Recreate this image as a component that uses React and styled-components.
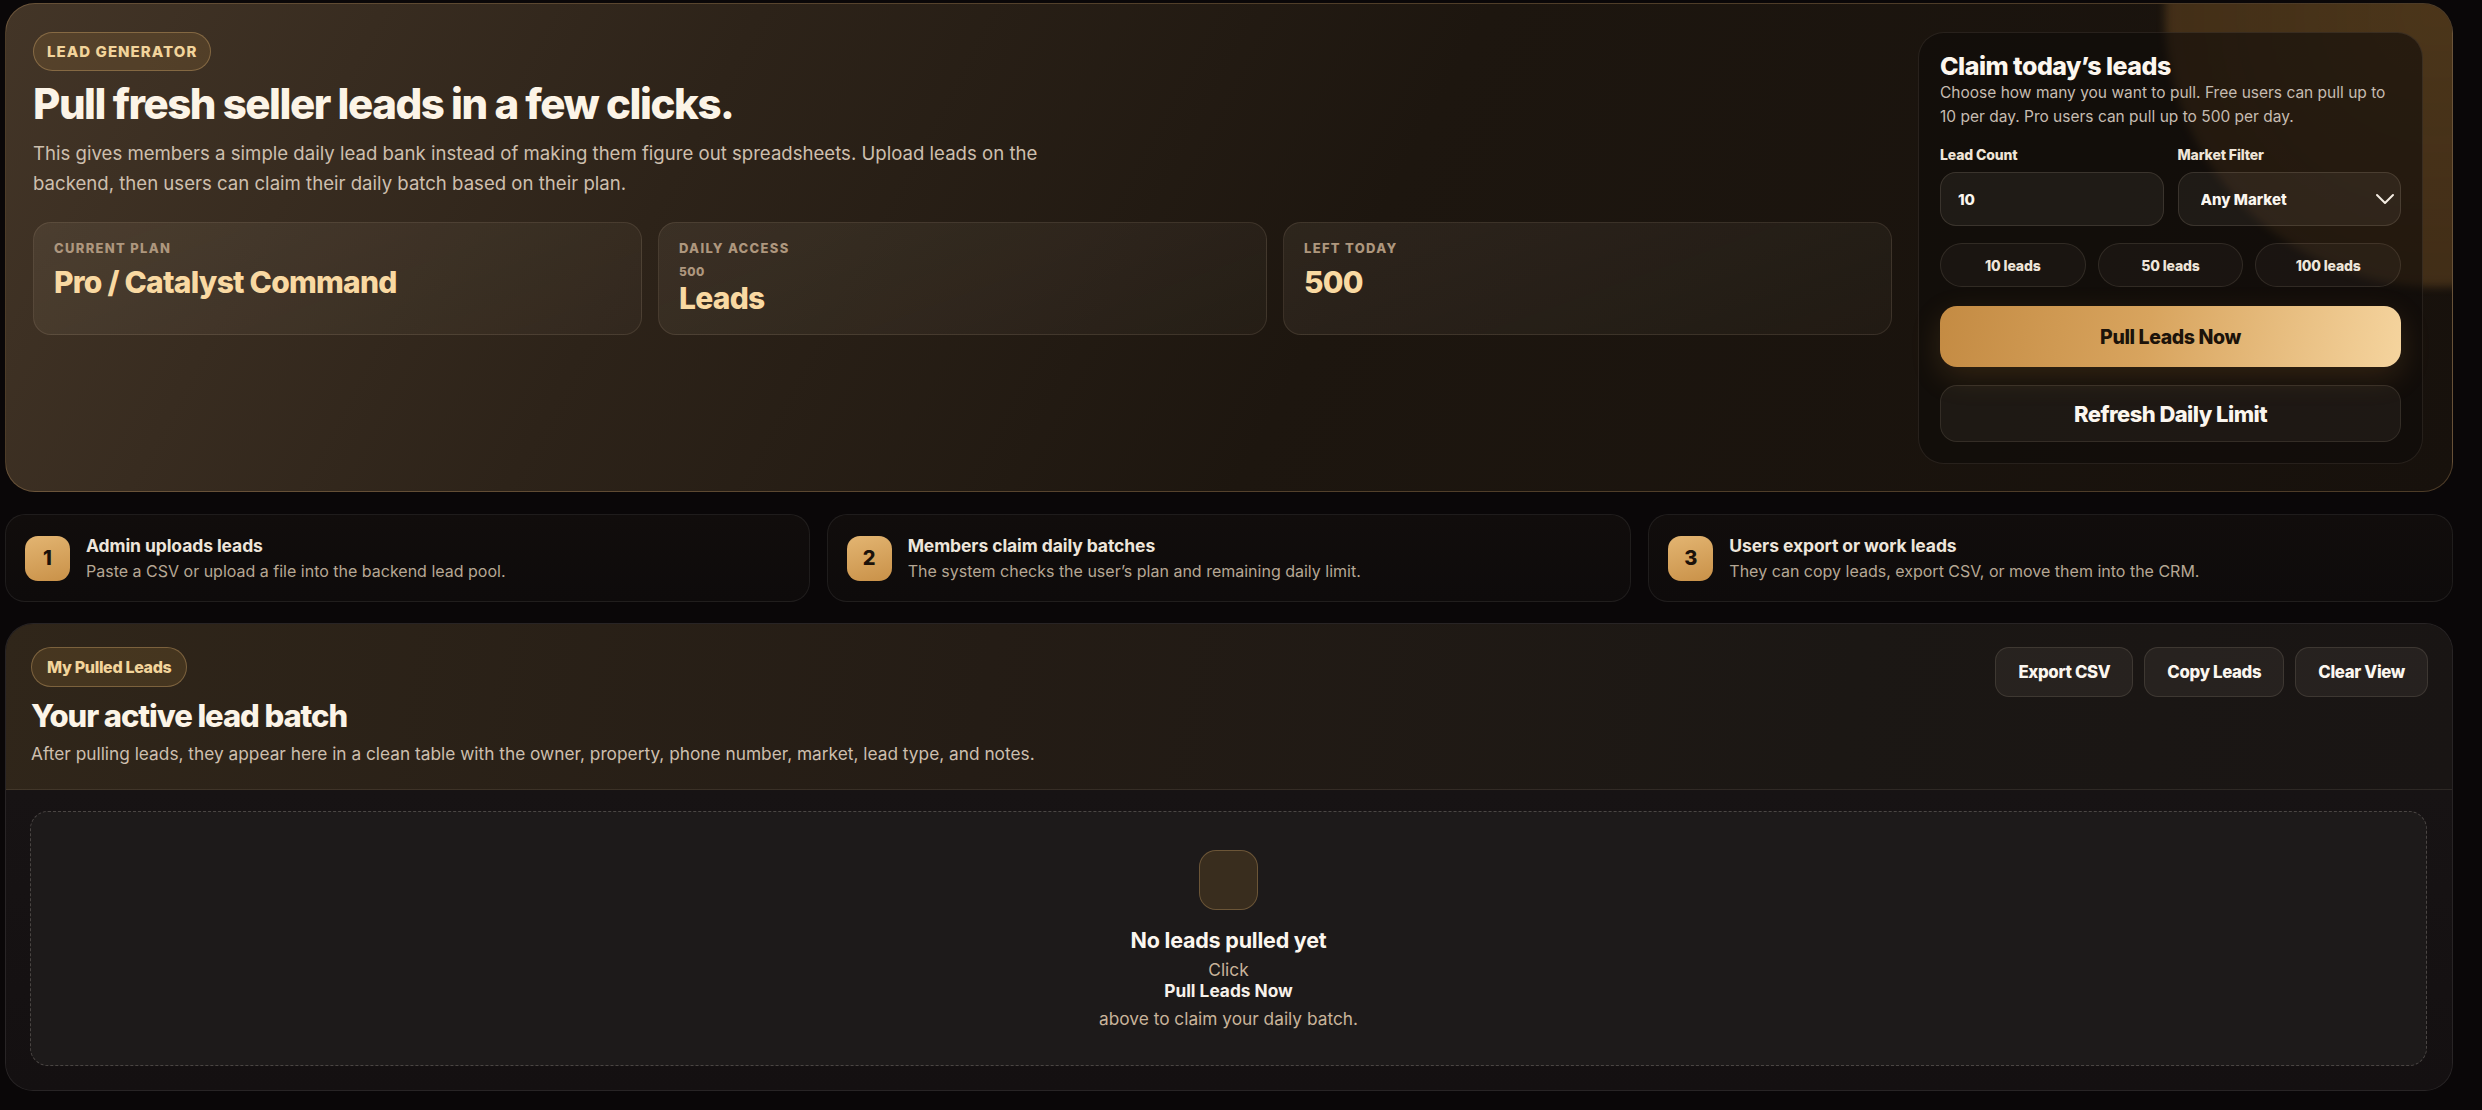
import React from "react";
import styled, { createGlobalStyle } from "styled-components";
import { ChevronDown } from "lucide-react";

const GlobalStyle = createGlobalStyle`
  * { box-sizing: border-box; }
  html, body { margin: 0; padding: 0; background: #0a0708; }
  body {
    font-family: Inter, "Noto Sans", "Liberation Sans", sans-serif;
    color: #f5eee4;
    -webkit-font-smoothing: antialiased;
  }
`;

const Page = styled.div`
  display: flex;
  flex-direction: column;
  gap: 21px;
  padding: 3px 29px 19px 5px;
  height: 100vh;
  background: #0a0708;
`;

/* ---------- hero ---------- */

const Hero = styled.section`
  position: relative;
  flex: none;
  overflow: hidden;
  display: grid;
  grid-template-columns: 1fr 505px;
  gap: 26px;
  padding: 28px 29px 27px 27px;
  border-radius: 30px;
  border: 1px solid rgba(214, 170, 110, 0.28);
  background: linear-gradient(118deg, #433527 0%, #2d2319 28%, #1d160f 55%, #17110c 100%);
`;

const Glow = styled.div`
  position: absolute;
  top: -262px;
  right: -258px;
  width: 545px;
  height: 545px;
  border-radius: 50%;
  background: radial-gradient(circle, rgba(215, 150, 65, 0.27) 0%, rgba(205, 140, 60, 0.23) 70%, rgba(205, 140, 60, 0.2) 100%);
  filter: blur(4px);
  pointer-events: none;
`;

const HeroMain = styled.div`
  position: relative;
  display: flex;
  flex-direction: column;
  align-items: flex-start;
  min-width: 0;
`;

const Pill = styled.span`
  display: inline-flex;
  align-items: center;
  height: ${(p) => p.$h || 39}px;
  padding: 0 ${(p) => p.$px || 13}px;
  border-radius: 999px;
  border: 1px solid rgba(214, 170, 110, 0.38);
  background: rgba(190, 140, 70, 0.16);
  color: #f2d49b;
  font-size: ${(p) => p.$fs || 14}px;
  font-weight: 800;
  letter-spacing: ${(p) => p.$ls || "0.06em"};
  text-transform: ${(p) => (p.$upper ? "uppercase" : "none")};
  white-space: nowrap;
`;

const HeroTitle = styled.h1`
  margin: 10px 0 0;
  font-size: 42px;
  line-height: 1.1;
  font-weight: 800;
  letter-spacing: -0.035em;
  color: #fcf4e7;
`;

const HeroText = styled.p`
  margin: 11px 0 0;
  max-width: 1060px;
  font-size: 18.6px;
  line-height: 30px;
  color: #cdbfae;
`;

const StatGrid = styled.div`
  align-self: stretch;
  display: grid;
  grid-template-columns: repeat(3, 1fr);
  gap: 16px;
  margin-top: 24px;
`;

const StatCard = styled.div`
  display: flex;
  flex-direction: column;
  padding: 18px 20px 18px;
  border-radius: 18px;
  border: 1px solid rgba(255, 230, 200, 0.1);
  background: linear-gradient(160deg, rgba(255, 235, 205, 0.07), rgba(255, 235, 205, 0.03));
`;

const StatLabel = styled.div`
  font-size: 13px;
  line-height: 15.6px;
  font-weight: 800;
  letter-spacing: 0.1em;
  text-transform: uppercase;
  color: #ae977e;
`;

const StatSub = styled.div`
  margin-top: 8px;
  font-size: 12px;
  line-height: 14.4px;
  font-weight: 800;
  letter-spacing: 0.04em;
  color: #ae977e;
`;

const StatValue = styled.div`
  margin-top: ${(p) => (p.$tight ? 2 : 8)}px;
  font-size: 30px;
  line-height: 34.5px;
  font-weight: 800;
  letter-spacing: -0.025em;
  color: #f9d9a2;
`;

/* ---------- claim panel ---------- */

const ClaimPanel = styled.div`
  position: relative;
  display: flex;
  flex-direction: column;
  padding: 18px 21px 21px;
  border-radius: 26px;
  border: 1px solid rgba(255, 235, 210, 0.09);
  background: rgba(14, 10, 8, 0.58);
`;

const ClaimTitle = styled.h2`
  margin: 0;
  font-size: 25px;
  line-height: 30px;
  font-weight: 800;
  letter-spacing: -0.02em;
  color: #fcf6ee;
`;

const ClaimText = styled.p`
  margin: 0;
  font-size: 15.5px;
  line-height: 24px;
  color: #c6bcb1;
`;

const FieldRow = styled.div`
  display: grid;
  grid-template-columns: 1fr 1fr;
  gap: 14px;
  margin-top: 17px;
`;

const Field = styled.label`
  display: flex;
  flex-direction: column;
  gap: 9px;
`;

const FieldLabel = styled.span`
  font-size: 14px;
  line-height: 17px;
  font-weight: 800;
  letter-spacing: -0.01em;
  color: #efe5d8;
`;

const fieldBox = `
  width: 100%;
  height: 54px;
  border-radius: 16px;
  border: 1px solid rgba(255, 235, 210, 0.12);
  background: rgba(255, 240, 220, 0.06);
  color: #fbf6ef;
  font-family: Inter, "Noto Sans", "Liberation Sans", sans-serif;
  font-size: 15px;
  font-weight: 800;
  outline: none;
`;

const TextInput = styled.input`
  ${fieldBox}
  padding: 0 17px;
`;

const SelectWrap = styled.div`
  position: relative;
  color: #f4ece2;
  svg {
    position: absolute;
    right: 0;
    top: 50%;
    transform: translateY(-50%);
    pointer-events: none;
  }
`;

const Select = styled.select`
  ${fieldBox}
  appearance: none;
  padding: 0 40px 0 22px;
`;

const QuickRow = styled.div`
  display: grid;
  grid-template-columns: repeat(3, 1fr);
  gap: 12px;
  margin-top: 17px;
`;

const QuickButton = styled.button`
  height: 44px;
  border-radius: 999px;
  border: 1px solid rgba(255, 235, 210, 0.1);
  background: rgba(255, 240, 220, 0.035);
  color: #efe6da;
  font-family: inherit;
  font-size: 14px;
  font-weight: 800;
  letter-spacing: -0.01em;
`;

const PrimaryButton = styled.button`
  height: 61px;
  margin-top: 19px;
  border: none;
  border-radius: 17px;
  background: linear-gradient(100deg, #c48b43 0%, #d8a45e 45%, #f5d49e 100%);
  box-shadow: 0 10px 30px rgba(200, 140, 60, 0.18);
  color: #1c130a;
  font-family: inherit;
  font-size: 19.5px;
  font-weight: 800;
  letter-spacing: -0.02em;
`;

const GhostButton = styled.button`
  height: 57px;
  margin-top: 18px;
  border-radius: 17px;
  border: 1px solid rgba(255, 235, 210, 0.1);
  background: rgba(255, 240, 220, 0.05);
  color: #fbf6ef;
  font-family: inherit;
  font-size: 22px;
  font-weight: 800;
  letter-spacing: -0.025em;
`;

/* ---------- steps ---------- */

const Steps = styled.div`
  flex: none;
  display: grid;
  grid-template-columns: repeat(3, 1fr);
  gap: 17px;
  margin-top: 1px;
`;

const StepCard = styled.div`
  display: flex;
  align-items: center;
  gap: 16px;
  height: 88px;
  padding: 0 19px;
  border-radius: 20px;
  border: 1px solid rgba(255, 255, 255, 0.07);
  background: linear-gradient(180deg, #110d0c, #0e0b0b);
`;

const StepNumber = styled.div`
  flex: none;
  display: grid;
  place-items: center;
  width: 45px;
  height: 45px;
  border-radius: 13px;
  background: linear-gradient(165deg, #e3b572 0%, #c99148 100%);
  color: #1b120a;
  font-size: 20px;
  font-weight: 800;
`;

const StepBody = styled.div`
  display: flex;
  flex-direction: column;
  gap: 5px;
`;

const StepTitle = styled.div`
  font-size: 17.5px;
  line-height: 20px;
  font-weight: 700;
  letter-spacing: -0.005em;
  color: #ede5db;
`;

const StepText = styled.div`
  font-size: 16px;
  line-height: 20px;
  color: #b6a794;
`;

/* ---------- pulled leads ---------- */

const LeadsSection = styled.section`
  flex: 1;
  min-height: 0;
  display: flex;
  flex-direction: column;
  overflow: hidden;
  border-radius: 28px;
  border: 1px solid rgba(255, 255, 255, 0.08);
  background: #161213;
`;

const LeadsHeader = styled.div`
  display: flex;
  justify-content: space-between;
  align-items: flex-start;
  padding: 23px 24px 23px 25px;
  border-bottom: 1px solid rgba(255, 235, 210, 0.09);
  background: linear-gradient(100deg, #30261a 0%, #241c15 40%, #1b1714 75%, #191514 100%);
`;

const HeaderText = styled.div`
  display: flex;
  flex-direction: column;
  align-items: flex-start;
`;

const SectionTitle = styled.h2`
  margin: 12px 0 0;
  font-size: 31px;
  line-height: 34.5px;
  font-weight: 800;
  letter-spacing: -0.035em;
  color: #fcf4e7;
`;

const SectionText = styled.p`
  margin: 8px 0 0;
  font-size: 17.3px;
  line-height: 24px;
  color: #cdbfae;
`;

const Actions = styled.div`
  display: flex;
  gap: 11px;
`;

const ActionButton = styled.button`
  height: 50px;
  padding: 0 22px;
  border-radius: 14px;
  border: 1px solid rgba(255, 235, 210, 0.11);
  background: rgba(255, 240, 220, 0.06);
  color: #fbf6ef;
  font-family: inherit;
  font-size: 16.8px;
  font-weight: 800;
  letter-spacing: -0.02em;
`;

const LeadsBody = styled.div`
  flex: 1;
  display: flex;
  flex-direction: column;
  padding: 21px 25px 24px 24px;
  background: linear-gradient(180deg, #171314 0%, #141011 100%);
`;

const EmptyState = styled.div`
  flex: 1;
  display: flex;
  flex-direction: column;
  align-items: center;
  padding: 38px 20px 0;
  border-radius: 18px;
  border: 1px dashed rgba(255, 245, 235, 0.2);
  background: #1d1a1a;
  text-align: center;
`;

const EmptyIcon = styled.div`
  width: 59px;
  height: 60px;
  border-radius: 17px;
  border: 1px solid rgba(214, 170, 110, 0.32);
  background: #392d1e;
`;

const EmptyTitle = styled.div`
  margin-top: 17px;
  font-size: 21.5px;
  line-height: 26px;
  font-weight: 700;
  letter-spacing: -0.01em;
  color: #fbf6ef;
`;

const EmptyLine = styled.div`
  margin-top: ${(p) => p.$mt || 0}px;
  font-size: 17.3px;
  line-height: 21px;
  font-weight: ${(p) => (p.$strong ? 700 : 400)};
  color: ${(p) => (p.$strong ? "#f7f1ea" : "#c9b49a")};
`;

const stats = [
  { label: "Current Plan", value: "Pro / Catalyst Command" },
  { label: "Daily Access", sub: "500", value: "Leads" },
  { label: "Left Today", value: "500" },
];

const steps = [
  { n: 1, title: "Admin uploads leads", text: "Paste a CSV or upload a file into the backend lead pool." },
  { n: 2, title: "Members claim daily batches", text: "The system checks the user’s plan and remaining daily limit." },
  { n: 3, title: "Users export or work leads", text: "They can copy leads, export CSV, or move them into the CRM." },
];

export default function App() {
  return (
    <>
      <GlobalStyle />
      <Page>
        <Hero>
          <Glow />
          <HeroMain>
            <Pill $upper $fs={15} $ls="0.07em">Lead Generator</Pill>
            <HeroTitle>Pull fresh seller leads in a few clicks.</HeroTitle>
            <HeroText>
              This gives members a simple daily lead bank instead of making them figure out spreadsheets. Upload leads on
              the backend, then users can claim their daily batch based on their plan.
            </HeroText>
            <StatGrid>
              {stats.map((s) => (
                <StatCard key={s.label}>
                  <StatLabel>{s.label}</StatLabel>
                  {s.sub && <StatSub>{s.sub}</StatSub>}
                  <StatValue $tight={!!s.sub}>{s.value}</StatValue>
                </StatCard>
              ))}
            </StatGrid>
          </HeroMain>

          <ClaimPanel>
            <ClaimTitle>Claim today’s leads</ClaimTitle>
            <ClaimText>
              Choose how many you want to pull. Free users can pull up to 10 per day. Pro users can pull up to 500 per day.
            </ClaimText>
            <FieldRow>
              <Field>
                <FieldLabel>Lead Count</FieldLabel>
                <TextInput type="number" defaultValue="10" />
              </Field>
              <Field>
                <FieldLabel>Market Filter</FieldLabel>
                <SelectWrap>
                  <Select defaultValue="any">
                    <option value="any">Any Market</option>
                  </Select>
                  <ChevronDown size={32} strokeWidth={1.5} />
                </SelectWrap>
              </Field>
            </FieldRow>
            <QuickRow>
              <QuickButton>10 leads</QuickButton>
              <QuickButton>50 leads</QuickButton>
              <QuickButton>100 leads</QuickButton>
            </QuickRow>
            <PrimaryButton>Pull Leads Now</PrimaryButton>
            <GhostButton>Refresh Daily Limit</GhostButton>
          </ClaimPanel>
        </Hero>

        <Steps>
          {steps.map((s) => (
            <StepCard key={s.n}>
              <StepNumber>{s.n}</StepNumber>
              <StepBody>
                <StepTitle>{s.title}</StepTitle>
                <StepText>{s.text}</StepText>
              </StepBody>
            </StepCard>
          ))}
        </Steps>

        <LeadsSection>
          <LeadsHeader>
            <HeaderText>
              <Pill $h={40} $px={15} $fs={16} $ls="-0.02em">My Pulled Leads</Pill>
              <SectionTitle>Your active lead batch</SectionTitle>
              <SectionText>
                After pulling leads, they appear here in a clean table with the owner, property, phone number, market, lead
                type, and notes.
              </SectionText>
            </HeaderText>
            <Actions>
              <ActionButton>Export CSV</ActionButton>
              <ActionButton>Copy Leads</ActionButton>
              <ActionButton>Clear View</ActionButton>
            </Actions>
          </LeadsHeader>
          <LeadsBody>
            <EmptyState>
              <EmptyIcon />
              <EmptyTitle>No leads pulled yet</EmptyTitle>
              <EmptyLine $mt={6}>Click</EmptyLine>
              <EmptyLine $strong>Pull Leads Now</EmptyLine>
              <EmptyLine $mt={7}>above to claim your daily batch.</EmptyLine>
            </EmptyState>
          </LeadsBody>
        </LeadsSection>
      </Page>
    </>
  );
}
